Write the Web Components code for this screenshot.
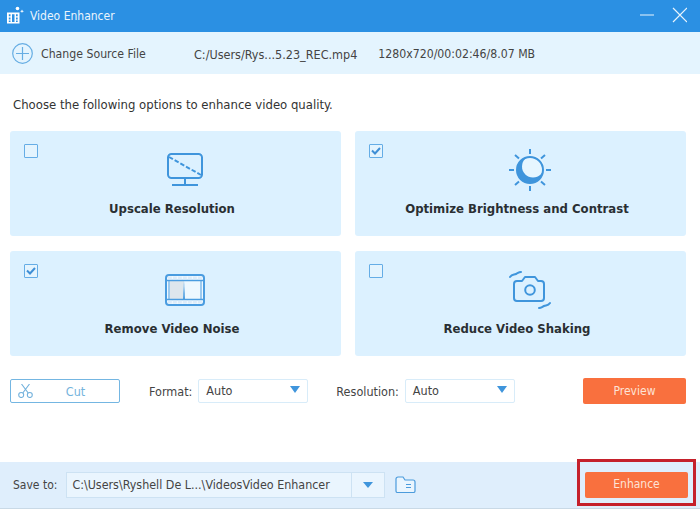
<!DOCTYPE html>
<html lang="en">
<head>
<meta charset="utf-8">
<title>Video Enhancer</title>
<style>
  html, body { margin: 0; height: 100%; background: #fff; overflow: hidden; }
  body { font: 12px "DejaVu Sans Condensed", "DejaVu Sans", sans-serif; font-stretch: condensed; color: #333; }
</style>
</head>
<body>
<enhancer-window>
  <title-bar slot="top">Video Enhancer</title-bar>
  <source-bar slot="top" path="C:/Users/Rys...5.23_REC.mp4" info="1280x720/00:02:46/8.07 MB"></source-bar>

  <option-grid>
    <option-card label="Upscale Resolution">
      <svg viewBox="0 0 36 34" width="36" height="34" fill="none" stroke="#3f95dc" stroke-width="2">
        <rect x="1" y="1" width="34" height="24" rx="3.5"/>
        <path d="M2 4L34 22" stroke-dasharray="4.5 2"/>
        <path d="M18 25v6M5 32h26"/>
      </svg>
    </option-card>
    <option-card label="Optimize Brightness and Contrast" checked>
      <svg viewBox="0 0 42 42" width="42" height="42" fill="none" stroke="#3f95dc" stroke-width="2">
        <circle cx="21" cy="21" r="13" fill="#3f95dc" stroke="none"/>
        <circle cx="24" cy="17.5" r="11" fill="#e6f6ff" stroke="none"/>
        <circle cx="21" cy="21" r="13"/>
        <path d="M21 0v5M21 37v5M0 21h5M37 21h5M6 6l4 3.500M36 6l-4 3.500M6 36l4-3.500M36 36l-4-3.500"/>
      </svg>
    </option-card>
    <option-card label="Remove Video Noise" checked>
      <svg viewBox="0 0 40 32" width="40" height="32" fill="none" stroke="#4a9ce0" stroke-width="2">
        <rect x="1" y="1" width="38" height="30" rx="3" fill="#eef8ff"/>
        <path d="M5 7h14l-1 18H5z" fill="#dde6ed" stroke="none"/>
        <path d="M1 6.500h38M1 25.500h38" stroke-width="1.500"/>
        <path d="M3 3.900h34M3 28.100h34" stroke="#dcecfa" stroke-width="2.600" stroke-dasharray="3.800 1.200"/>
        <path d="M4 7v18M36 7v18" stroke-width="1"/>
        <path d="M19 7l-1 18h2z" fill="#4a9ce0" stroke="none"/>
      </svg>
    </option-card>
    <option-card label="Reduce Video Shaking">
      <svg viewBox="0 0 42 38" width="42" height="38" fill="none" stroke="#3f95dc" stroke-width="2" stroke-linecap="round">
        <path d="M1 6C3 3 5 4 7 3s3-2 5-2"/>
        <path d="M30 37c2 0 3-1 5-2s4 0 6-3"/>
        <path d="M8 10h5l3-4h10l3 4h3a3 3 0 0 1 3 3v14a3 3 0 0 1-3 3H8a3 3 0 0 1-3-3V13a3 3 0 0 1 3-3z" stroke-linejoin="round"/>
        <circle cx="21" cy="19" r="4.800"/>
      </svg>
    </option-card>
  </option-grid>

  <tool-row>
    <cut-button>Cut</cut-button>
    <field-select label="Format:" value="Auto" style="margin-left:29px"></field-select>
    <field-select label="Resolution:" value="Auto" style="margin-left:28px"></field-select>
    <action-button style="margin-left:auto;--h:26px">Preview</action-button>
  </tool-row>

  <save-bar slot="bottom" path="C:\Users\Ryshell De L...\VideosVideo Enhancer">
    <action-button>Enhance</action-button>
  </save-bar>
</enhancer-window>

<script>
// Small helper, every component has the same boilerplate
function defineEl(name, html, extra) {
  const tpl = document.createElement('template');
  tpl.innerHTML = html;
  class El extends HTMLElement {
    constructor() {
      super();
      this.attachShadow({ mode: 'open' }).appendChild(tpl.content.cloneNode(true));
    }
    connectedCallback() {
      if (extra) extra(this, this.shadowRoot);
    }
  }
  customElements.define(name, El);
}

defineEl('enhancer-window', `
  <style>
    :host { display: flex; flex-direction: column; width: 700px; height: 509px; }
    main { flex: 1; min-height: 0; display: flex; flex-direction: column; }
  </style>
  <slot name="top"></slot>
  <main><slot></slot></main>
  <slot name="bottom"></slot>
`);

defineEl('title-bar', `
  <style>
    :host { display: flex; align-items: center; height: 32px; background: #2b90e3; color: #eaf5fd;
      font-size: 12px; padding: 0 13px 2px 7px; box-sizing: border-box; }
    .name { margin-left: 6px; padding-top: 2px; flex: 1; }
    svg { display: block; }
  </style>
  <svg width="17" height="18" viewBox="0 0 17 18" fill="#fff">
    <path d="M0 6.500h12.500v11H0zM1.800 8.200v2h1.700v-2zM1.800 11.500v2h1.700v-2zM1.800 14.500v1.500h1.700v-1.500zM5 8.200v7.800h2.500V8.200zM9 8.200v2h1.700v-2zM9 11.500v2h1.700v-2zM9 14.500v1.500h1.700v-1.500z" fill-rule="evenodd"/>
    <circle cx="10.500" cy="2.500" r="1.800"/><path d="M15 3.500l.6 1.300 1.400.4-1.400.5-.6 1.300-.6-1.300-1.400-.5 1.400-.4z"/>
  </svg>
  <span class="name"><slot></slot></span>
  <svg width="47" height="16" viewBox="0 0 47 16" fill="none" stroke="#e8f4fd" stroke-width="1.200">
    <path d="M0 8h14M33 1l14 14M47 1L33 15"/>
  </svg>
`);

defineEl('source-bar', `
  <style>
    :host { display: flex; align-items: center; height: 42px; background: #e4f4fe; color: #444;
      padding-left: 12px; box-sizing: border-box; font-size: 12.500px; }
    svg { display: block; }
    span { padding-top: 2px; }
    .change { margin-left: 8px; width: 153px; font-size: 12.200px; }
    .info { margin-left: 21px; font-size: 12.200px; }
  </style>
  <svg width="21" height="21" viewBox="0 0 21 21" fill="none" stroke="#66ade3" stroke-width="1.200">
    <circle cx="10.500" cy="10.500" r="9.800"/><path d="M10.500 4v13M4 10.500h13"/>
  </svg>
  <span class="change">Change Source File</span>
  <span id="path"></span>
  <span class="info" id="info"></span>
`, (el, root) => {
  root.getElementById('path').textContent = el.getAttribute('path');
  root.getElementById('info').textContent = el.getAttribute('info');
});

defineEl('option-grid', `
  <style>
    :host { display: block; padding: 22px 14px 0 10px; }
    p { margin: 0 0 17px 3px; font-size: 13px; line-height: 18px; color: #333; }
    .grid { display: grid; grid-template-columns: 331px 331px; column-gap: 14px; row-gap: 15px; }
  </style>
  <p>Choose the following options to enhance video quality.</p>
  <div class="grid"><slot></slot></div>
`);

defineEl('option-card', `
  <style>
    :host { display: grid; height: 105px; background: #dcf1ff; border-radius: 3px; color: #2a2f33; }
    .check { grid-area: 1 / 1; justify-self: start; align-self: start; margin: 13px 0 0 14px;
      width: 12px; height: 12px; border: 1.500px solid #65ade6; border-radius: 1px; background: #e4f4fe; display: flex; }
    .body { grid-area: 1 / 1; display: flex; flex-direction: column; align-items: center; }
    .icon { height: 46px; margin-top: 16px; padding-left: 19px; display: flex; align-items: center; }
    .label { margin-top: 7px; padding-right: 7px; font-weight: 700; font-size: 13px; line-height: 18px; }
    svg { display: block; }
  </style>
  <div class="check" id="check"></div>
  <div class="body">
    <div class="icon"><slot></slot></div>
    <div class="label" id="label"></div>
  </div>
`, (el, root) => {
  root.getElementById('label').textContent = el.getAttribute('label');
  if (el.hasAttribute('checked')) {
    root.getElementById('check').innerHTML = '<svg width="12" height="12" viewBox="0 0 12 12" fill="none" stroke="#3f8fd6" stroke-width="2"><path d="M2 5.500l3 3 5-5.500"/></svg>';
  }
});

defineEl('tool-row', `
  <style>
    :host { display: flex; align-items: center; height: 26px; margin: 22px 14px 0 10px; color: #444; font-size: 12.500px; }
  </style>
  <slot></slot>
`);

defineEl('cut-button', `
  <style>
    :host { display: flex; align-items: center; width: 110px; height: 24px; box-sizing: border-box; margin-bottom: 1px;
      border: 1px solid #74b6e2; border-radius: 2px; background: #fff; color: #74b3dc; padding-left: 7px; }
    span { flex: 1; text-align: center; padding-right: 9px; padding-left: 8px; padding-top: 1px; }
    svg { display: block; }
  </style>
  <svg width="15" height="14" viewBox="0 0 15 14" fill="none" stroke="#72b1dc" stroke-width="1.100">
    <circle cx="3.200" cy="11" r="2.500"/><circle cx="11.800" cy="11" r="2.500"/>
    <path d="M4.800 9L11.500 0M10.200 9L3.500 0"/>
  </svg>
  <span><slot></slot></span>
`);

defineEl('field-select', `
  <style>
    :host { display: flex; align-items: center; gap: 6px; }
    span { padding-top: 1px; }
    .box { display: flex; align-items: center; justify-content: space-between; width: 110px; height: 24px; box-sizing: border-box; margin-bottom: 1px;
      border: 1px solid #d8ecf9; border-radius: 2px; padding: 0 7px 2px 7px; color: #444; background: #fff; }
    i { display: block; width: 0; height: 0; border: 5.500px solid transparent; border-top: 7px solid #3f95dc; border-bottom: 0; }
  </style>
  <span id="label"></span>
  <div class="box"><span id="value"></span><i></i></div>
`, (el, root) => {
  root.getElementById('label').textContent = el.getAttribute('label');
  root.getElementById('value').textContent = el.getAttribute('value');
});

defineEl('action-button', `
  <style>
    :host { display: flex; align-items: center; justify-content: center; width: 103px; height: var(--h, 26px);
      background: #f9703e; border-radius: 2px; color: #fde3d6; padding-bottom: 1px; box-sizing: border-box; font-size: 12px; }
  </style>
  <slot></slot>
`);

defineEl('save-bar', `
  <style>
    :host { display: flex; align-items: center; position: relative; height: 47px; box-sizing: border-box;
      background: #dfeefc; border-bottom: 1px solid #c9d9e6; padding: 0 12px 1px 13px; color: #444; }
    .box { display: flex; align-items: center; width: 319px; height: 26px; box-sizing: border-box; margin-left: 9px;
      border: 1px solid #cde2f3; background: #eaf5fe; }
    .box span { flex: 1; padding: 0 5px; white-space: nowrap; font-size: 12.400px; }
    .arrow { width: 32px; height: 100%; border-left: 1px solid #cde2f3; display: flex; align-items: center; justify-content: center; }
    .arrow i { display: block; width: 0; height: 0; border: 5px solid transparent; border-top: 6px solid #3f95dc; border-bottom: 0; }
    svg { display: block; margin-left: 10px; }
    ::slotted(action-button) { margin-left: auto; }
    /* red annotation drawn over the Enhance button */
    .mark { position: absolute; left: 577px; top: -3px; width: 119px; height: 47px; box-sizing: border-box; border: 3px solid #c5202b; }
  </style>
  <span>Save to:</span>
  <div class="box"><span id="path"></span><div class="arrow"><i></i></div></div>
  <svg width="21" height="17" viewBox="0 0 21 17" fill="#eaf5fe" stroke="#4b9bdc" stroke-width="1.200">
    <path d="M1 15V3a2 2 0 0 1 2-2h5l2 3h8a2 2 0 0 1 2 2v9a1.500 1.500 0 0 1-1.500 1.500h-16A1.500 1.500 0 0 1 1 15z"/>
    <path d="M11 8.500h5M11 11.500h5"/>
  </svg>
  <slot></slot>
  <div class="mark"></div>
`, (el, root) => {
  root.getElementById('path').textContent = el.getAttribute('path');
});
</script>
</body>
</html>
